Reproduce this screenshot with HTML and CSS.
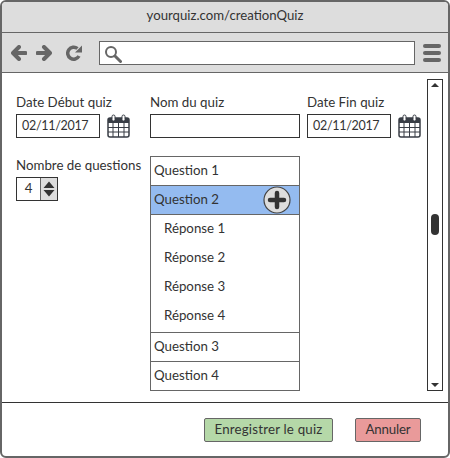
FILE: index.html
```html
<!DOCTYPE html>
<html lang="fr">

<head>
    <title>Création de quiz</title>
    <meta charset="utf-8">
    <link rel="stylesheet" href="styles.css">
</head>

<body>
    <div class="window">
        <div class="title_bar">yourquiz.com/creationQuiz</div>

        <div class="tool_bar">
            <svg class="nav_icon" width="16" height="16" viewBox="0 0 16 16">
                <path d="M8 2 2 8 8 14M3 8H14.500" fill="none" stroke="#666" stroke-width="4" stroke-linejoin="round" stroke-linecap="round" />
            </svg>
            <svg class="nav_icon" width="16" height="16" viewBox="0 0 16 16">
                <path d="M8 2 14 8 8 14M13 8H1.500" fill="none" stroke="#666" stroke-width="4" stroke-linejoin="round" stroke-linecap="round" />
            </svg>
            <svg class="nav_icon reload" width="16" height="16" viewBox="0 0 16 16">
                <path d="M13 11A6 6 0 1 1 11.500 3.500" fill="none" stroke="#666" stroke-width="3.500" />
                <path d="M9 7.500h7V0.500z" fill="#666" />
            </svg>
            <div class="url_box">
                <svg width="18" height="18" viewBox="0 0 18 18">
                    <circle cx="7" cy="7" r="5" fill="none" stroke="#666" stroke-width="2" />
                    <path d="M11 11l5.500 5.500" stroke="#666" stroke-width="3" stroke-linecap="round" />
                </svg>
            </div>
            <div class="menu_icon"><span></span><span></span><span></span></div>
        </div>

        <div class="content">
            <div class="form">
                <div class="field">
                    <label>Date Début quiz</label>
                    <div class="date_row">
                        <div class="input date_input">02/11/2017</div>
                        <svg class="calendar" width="23" height="24" viewBox="0 0 23 24">
                            <rect x="1" y="4" width="21" height="19" rx="2" fill="#fff" stroke="#383d45" stroke-width="1.500" />
                            <rect x="1" y="4" width="21" height="5" fill="#383d45" />
                            <rect x="5" y="1" width="3" height="6" rx="1.500" fill="#fff" stroke="#383d45" />
                            <rect x="15" y="1" width="3" height="6" rx="1.500" fill="#fff" stroke="#383d45" />
                            <path d="M1 13.500h21M1 18h21M6 9v14M11.500 9v14M17 9v14" stroke="#383d45" />
                        </svg>
                    </div>
                </div>

                <div class="field">
                    <label>Nom du quiz</label>
                    <div class="input name_input"></div>
                </div>

                <div class="field">
                    <label>Date Fin quiz</label>
                    <div class="date_row">
                        <div class="input date_input">02/11/2017</div>
                        <svg class="calendar" width="23" height="24" viewBox="0 0 23 24">
                            <rect x="1" y="4" width="21" height="19" rx="2" fill="#fff" stroke="#383d45" stroke-width="1.500" />
                            <rect x="1" y="4" width="21" height="5" fill="#383d45" />
                            <rect x="5" y="1" width="3" height="6" rx="1.500" fill="#fff" stroke="#383d45" />
                            <rect x="15" y="1" width="3" height="6" rx="1.500" fill="#fff" stroke="#383d45" />
                            <path d="M1 13.500h21M1 18h21M6 9v14M11.500 9v14M17 9v14" stroke="#383d45" />
                        </svg>
                    </div>
                </div>

                <div class="field">
                    <label>Nombre de questions</label>
                    <div class="spinner">
                        <div class="spinner_value">4</div>
                        <div class="spinner_arrows">
                            <svg width="12" height="16" viewBox="0 0 12 16">
                                <path d="M6 0.500l5.500 6.500H0.500zM6 15.500l5.500-6.500H0.500z" fill="#333" />
                            </svg>
                        </div>
                    </div>
                </div>

                <ul class="question_list">
                    <li class="question">Question 1</li>
                    <li class="question selected">
                        Question 2
                        <svg class="add_icon" width="28" height="28" viewBox="0 0 28 28">
                            <circle cx="14" cy="14" r="13" fill="#ddd" stroke="#444" stroke-width="1.200" />
                            <path d="M14 7v14M7 14h14" stroke="#333" stroke-width="4.500" stroke-linecap="round" />
                        </svg>
                    </li>
                    <li class="answers">
                        <div class="answer">Réponse 1</div>
                        <div class="answer">Réponse 2</div>
                        <div class="answer">Réponse 3</div>
                        <div class="answer">Réponse 4</div>
                    </li>
                    <li class="question">Question 3</li>
                    <li class="question">Question 4</li>
                </ul>
            </div>

            <div class="scrollbar">
                <span class="arrow_up"></span>
                <span class="thumb"></span>
                <span class="arrow_down"></span>
            </div>
        </div>

        <div class="footer">
            <button class="save">Enregistrer le quiz</button>
            <button class="cancel">Annuler</button>
        </div>
    </div>
</body>

</html>
```

FILE: styles.css
```css
* {
    box-sizing: border-box;
}

html,
body {
    background-color: white;
    color: #333;
}

body {
    margin: 0;
    padding: 0;
    font-family: Lato, "Open Sans", sans-serif;
    font-size: 13.3px;
}

.window {
    width: 450px;
    height: 458px;
    border: 2px solid #666;
    border-radius: 6px;
    display: flex;
    flex-direction: column;
    overflow: hidden;
}

.title_bar {
    height: 31px;
    padding-bottom: 5px;
    background-color: #ddd;
    border-bottom: 1px solid #666;
    display: flex;
    align-items: center;
    justify-content: center;
    font-size: 13.2px;
}

.tool_bar {
    height: 40px;
    background-color: #ddd;
    border-bottom: 1px solid #666;
    display: flex;
    align-items: center;
    padding-left: 9px;
}

.nav_icon {
    margin-right: 9px;
}

.nav_icon.reload {
    margin-left: 5px;
    margin-right: 17px;
}

.url_box {
    width: 316px;
    height: 24px;
    background-color: white;
    border: 1px solid #666;
    padding: 3px 0 0 4px;
}

.menu_icon {
    margin-left: 8px;
    width: 18px;
    display: flex;
    flex-direction: column;
    gap: 3px;
}

.menu_icon span {
    height: 4px;
    border-radius: 2px;
    background-color: #666;
}

.content {
    height: 329px;
    display: flex;
    align-items: flex-start;
}

.form {
    width: 425px;
    padding: 20px 0 0 14px;
    display: grid;
    grid-template-columns: 134px 157px auto;
    grid-template-rows: auto auto;
    row-gap: 18px;
}

.field {
    display: flex;
    flex-direction: column;
    align-items: flex-start;
    gap: 3px;
}

.field label {
    height: 18px;
    line-height: 18px;
    white-space: nowrap;
}

.date_row {
    display: flex;
    gap: 7px;
}

.input {
    height: 24px;
    line-height: 21px;
    background-color: white;
    border: 1px solid #333;
    padding-left: 5px;
}

.date_input {
    width: 84px;
    font-size: 12.5px;
    letter-spacing: -0.3px;
}

.name_input {
    width: 150px;
}

.spinner {
    width: 42px;
    height: 24px;
    border: 1px solid #333;
    display: flex;
}

.spinner_value {
    width: 23px;
    line-height: 21px;
    text-align: center;
}

.spinner_arrows {
    flex: 1;
    background-color: #ddd;
    border-left: 1px solid #666;
    display: flex;
    align-items: center;
    justify-content: center;
}

.question_list {
    grid-column: 2 / 4;
    width: 150px;
    margin: 0;
    padding: 0;
    list-style: none;
    border: 1px solid #666;
}

.question {
    height: 29px;
    padding: 0 0 2px 3px;
    border-bottom: 1px solid #666;
    display: flex;
    align-items: center;
    justify-content: space-between;
}

.question:last-child {
    border-bottom: none;
    height: 28px;
}

.question.selected {
    background-color: #94bbf0;
}

.add_icon {
    margin: 0 8px -2px 0;
}

.answers {
    height: 118px;
    padding-left: 13px;
    border-bottom: 1px solid #666;
}

.answer {
    height: 29px;
    padding-bottom: 3px;
    display: flex;
    align-items: center;
}

.scrollbar {
    position: relative;
    width: 16px;
    height: 312px;
    margin-top: 6px;
    background-color: white;
    border: 1px solid #333;
}

.arrow_up,
.arrow_down {
    position: absolute;
    left: 3px;
    width: 0;
    height: 0;
    border-left: 4px solid transparent;
    border-right: 4px solid transparent;
}

.arrow_up {
    top: 3px;
    border-bottom: 4px solid #333;
}

.arrow_down {
    bottom: 3px;
    border-top: 4px solid #333;
}

.thumb {
    position: absolute;
    left: 3px;
    top: 134px;
    width: 8px;
    height: 21px;
    border-radius: 4px;
    background-color: #333;
}

.footer {
    flex: 1;
    border-top: 1px solid #333;
    display: flex;
    justify-content: flex-end;
    align-items: flex-start;
    gap: 22px;
    padding: 15px 27px 0 0;
}

button {
    height: 24px;
    padding: 0 0 2px;
    font: inherit;
    color: #333;
    border: 1px solid #666;
    border-radius: 2px;
}

.save {
    width: 129px;
    background-color: #b5d8a8;
    letter-spacing: 0.2px;
}

.cancel {
    width: 66px;
    background-color: #e99a9a;
    letter-spacing: -0.2px;
}
```
